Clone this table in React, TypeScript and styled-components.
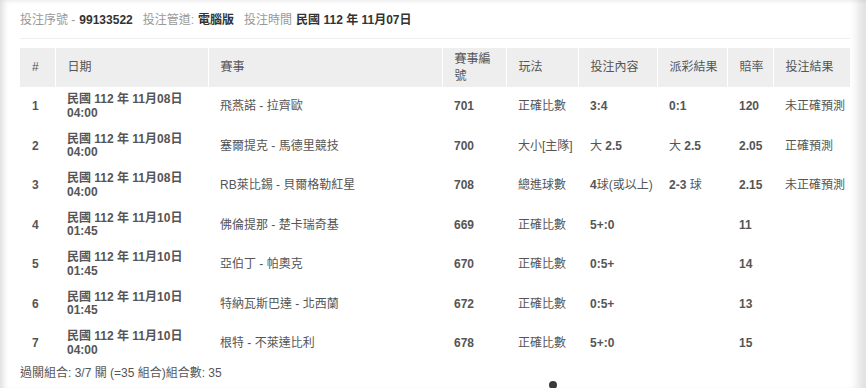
import React from 'react'
import styled, { createGlobalStyle } from 'styled-components'

const GlobalStyle = createGlobalStyle`
  html, body {
    margin: 0;
    padding: 0;
    background: #fff;
  }
  body {
    font-family: "Liberation Sans", Arial, "Noto Sans CJK TC", sans-serif;
    font-size: 12px;
    color: #555;
  }
`

const Frame = styled.div`
  position: relative;
  width: 866px;
  height: 388px;
  overflow: hidden;
  box-sizing: border-box;
  padding: 12px 16px 0 20px;
  background: #fff;
  box-shadow:
    inset 7px 3px 6px -4px rgba(0, 0, 0, 0.14),
    inset -14px 0 10px -6px rgba(0, 0, 0, 0.12);
`

const Summary = styled.div`
  line-height: 17px;
  padding-bottom: 9px;
  border-bottom: 1px solid #eee;
  margin-bottom: 9px;
`

const Label = styled.span`
  color: #999;
  margin-right: 4px;
`

const Value = styled.span`
  color: #333;
  font-weight: 700;
  margin-right: 10px;
`

const Table = styled.table`
  width: 830px;
  table-layout: fixed;
  border-collapse: collapse;
`

const Th = styled.th`
  background: #eee;
  font-weight: 400;
  color: #555;
  text-align: left;
  vertical-align: middle;
  line-height: 17px;
  padding: 2.5px 6px 2.5px 12px;
  border-right: 1px solid #fff;
  &:last-child {
    border-right: none;
  }
`

const Td = styled.td<{ $bold?: boolean }>`
  vertical-align: middle;
  line-height: 13.5px;
  padding: 6.25px 6px 6.25px 12px;
  font-weight: ${p => (p.$bold ? 700 : 400)};
  color: #555;
  white-space: nowrap;
`

const Num = styled.b`
  font-weight: 700;
`

const Footer = styled.div`
  line-height: 17px;
  margin-top: 1px;
`

const Dot = styled.div`
  position: absolute;
  left: 549px;
  top: 381px;
  width: 8px;
  height: 8px;
  border-radius: 50%;
  background: #3a3a3a;
`

interface Bet {
  date: string
  time: string
  match: string
  code: string
  play: string
  pick: React.ReactNode
  payout: React.ReactNode
  odds: string
  result: string
}

const bets: Bet[] = [
  { date: '民國 112 年 11月08日', time: '04:00', match: '飛燕諾 - 拉齊歐', code: '701', play: '正確比數', pick: <Num>3:4</Num>, payout: <Num>0:1</Num>, odds: '120', result: '未正確預測' },
  { date: '民國 112 年 11月08日', time: '04:00', match: '塞爾提克 - 馬德里競技', code: '700', play: '大小[主隊]', pick: <>大 <Num>2.5</Num></>, payout: <>大 <Num>2.5</Num></>, odds: '2.05', result: '正確預測' },
  { date: '民國 112 年 11月08日', time: '04:00', match: 'RB萊比錫 - 貝爾格勒紅星', code: '708', play: '總進球數', pick: <><Num>4</Num>球(或以上)</>, payout: <><Num>2-3</Num> 球</>, odds: '2.15', result: '未正確預測' },
  { date: '民國 112 年 11月10日', time: '01:45', match: '佛倫提那 - 楚卡瑞奇基', code: '669', play: '正確比數', pick: <Num>5+:0</Num>, payout: '', odds: '11', result: '' },
  { date: '民國 112 年 11月10日', time: '01:45', match: '亞伯丁 - 帕奧克', code: '670', play: '正確比數', pick: <Num>0:5+</Num>, payout: '', odds: '14', result: '' },
  { date: '民國 112 年 11月10日', time: '01:45', match: '特納瓦斯巴達 - 北西蘭', code: '672', play: '正確比數', pick: <Num>0:5+</Num>, payout: '', odds: '13', result: '' },
  { date: '民國 112 年 11月10日', time: '04:00', match: '根特 - 不萊達比利', code: '678', play: '正確比數', pick: <Num>5+:0</Num>, payout: '', odds: '15', result: '' },
]

const widths = [35, 153, 234, 64, 72, 79, 70, 46, 77]
const heads = ['#', '日期', '賽事', '賽事編號', '玩法', '投注內容', '派彩結果', '賠率', '投注結果']

function App() {
  return (
    <>
      <GlobalStyle />
      <Frame>
        <Summary>
          <Label>投注序號 -</Label>
          <Value>99133522</Value>
          <Label>投注管道:</Label>
          <Value>電腦版</Value>
          <Label>投注時間</Label>
          <Value>民國 112 年 11月07日</Value>
        </Summary>
        <Table>
          <colgroup>
            {widths.map((w, i) => (
              <col key={i} style={{ width: w }} />
            ))}
          </colgroup>
          <thead>
            <tr>
              {heads.map(h => (
                <Th key={h}>{h}</Th>
              ))}
            </tr>
          </thead>
          <tbody>
            {bets.map((bet, i) => (
              <tr key={i}>
                <Td $bold>{i + 1}</Td>
                <Td $bold>
                  {bet.date}
                  <br />
                  {bet.time}
                </Td>
                <Td>{bet.match}</Td>
                <Td $bold>{bet.code}</Td>
                <Td>{bet.play}</Td>
                <Td>{bet.pick}</Td>
                <Td>{bet.payout}</Td>
                <Td $bold>{bet.odds}</Td>
                <Td>{bet.result}</Td>
              </tr>
            ))}
          </tbody>
        </Table>
        <Footer>過關組合: 3/7 關 (=35 組合)組合數: 35</Footer>
        <Dot />
      </Frame>
    </>
  )
}

export default App
